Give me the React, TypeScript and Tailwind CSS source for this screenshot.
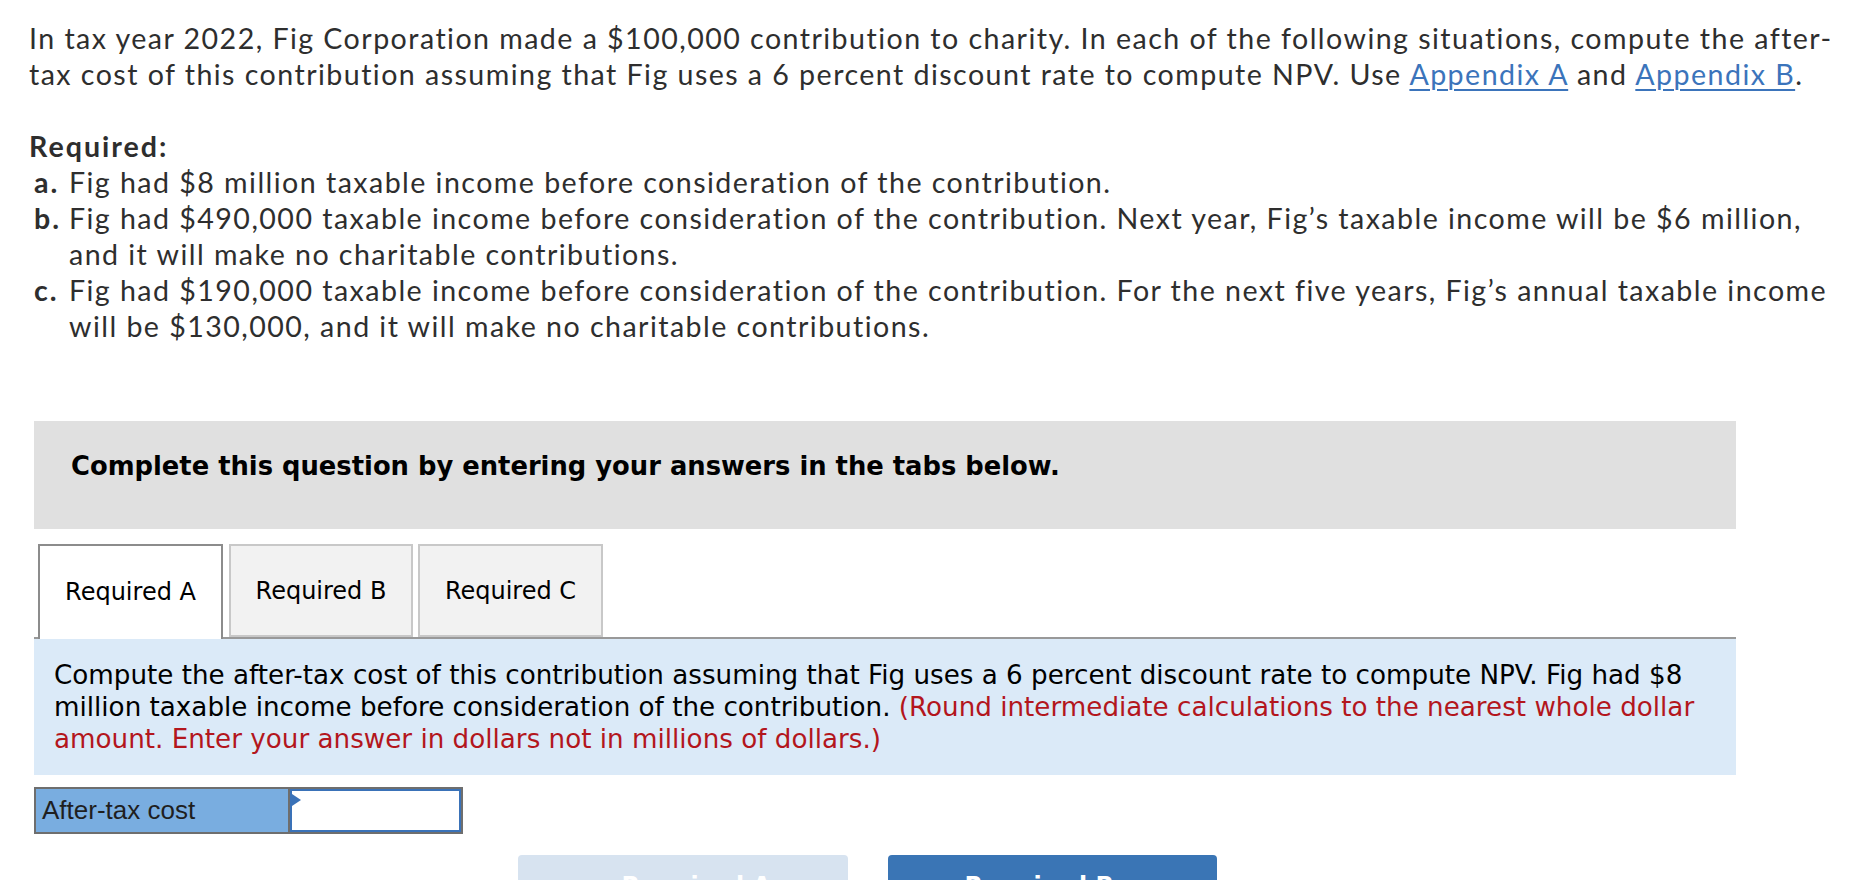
import React from "react";

const link = "text-[#3b74bb] underline underline-offset-[4px] decoration-[2px]";

function Item({ label, children }: { label: string; children: React.ReactNode }) {
  return (
    <div className="flex">
      <span className="w-[40px] shrink-0 pl-[5px] font-bold tracking-[2px]">{label}</span>
      <div>{children}</div>
    </div>
  );
}

function Tab({ label, active, className }: { label: string; active?: boolean; className: string }) {
  return (
    <div
      className={
        active
          ? `h-[95px] -mb-[2px] bg-white border-2 border-b-0 border-[#8c8c8c] flex items-center justify-center pb-[2px] ${className}`
          : `h-[93px] bg-[#f2f2f2] border-2 border-[#c8c8c8] flex items-center justify-center ${className}`
      }
    >
      {label}
    </div>
  );
}

export default function App() {
  return (
    <div className="min-h-screen bg-white">
      {/* question text */}
      <div className="pl-[29px] pt-[20px] text-[28.6px] leading-[36px] tracking-[1.45px] text-[#2e2e2e] font-['Lato',sans-serif] whitespace-nowrap">
        <p>
          In tax year 2022, Fig Corporation made a $100,000 contribution to charity. In each of the following situations, compute the after-
          <br />
          tax cost of this contribution assuming that Fig uses a 6 percent discount rate to compute NPV. Use{" "}
          <a className={link}>Appendix A</a> and <a className={link}>Appendix B</a>.
        </p>
        <p className="mt-[36px] font-bold tracking-[2px]">Required:</p>
        <Item label="a.">Fig had $8 million taxable income before consideration of the contribution.</Item>
        <Item label="b.">
          Fig had $490,000 taxable income before consideration of the contribution. Next year, Fig’s taxable income will be $6 million,
          <br />
          and it will make no charitable contributions.
        </Item>
        <Item label="c.">
          Fig had $190,000 taxable income before consideration of the contribution. For the next five years, Fig’s annual taxable income
          <br />
          will be $130,000, and it will make no charitable contributions.
        </Item>
      </div>

      {/* instructions bar */}
      <div className="ml-[34px] mt-[77px] w-[1702px] h-[108px] bg-[#e0e0e0] pl-[37px] pt-[30px]">
        <p className="font-['DejaVu_Sans',sans-serif] font-bold text-[25.8px] leading-[30px] text-black whitespace-nowrap">
          Complete this question by entering your answers in the tabs below.
        </p>
      </div>

      {/* tabs */}
      <div className="ml-[34px] mt-[15px] w-[1702px] h-[95px] border-b-2 border-[#999] flex items-start font-['DejaVu_Sans',sans-serif] text-[24px] text-black">
        <Tab label="Required A" active className="ml-[4px] w-[185px]" />
        <Tab label="Required B" className="ml-[6px] w-[184px]" />
        <Tab label="Required C" className="ml-[5px] w-[185px]" />
      </div>

      {/* prompt */}
      <div className="ml-[34px] w-[1702px] bg-[#dbeaf8] px-[20px] py-[20px] font-['DejaVu_Sans',sans-serif] text-[26.2px] leading-[32px] text-black whitespace-nowrap">
        Compute the after-tax cost of this contribution assuming that Fig uses a 6 percent discount rate to compute NPV. Fig had $8
        <br />
        million taxable income before consideration of the contribution.{" "}
        <span className="text-[#b3161d]">
          (Round intermediate calculations to the nearest whole dollar
          <br />
          amount. Enter your answer in dollars not in millions of dollars.)
        </span>
      </div>

      {/* answer row */}
      <div className="ml-[34px] mt-[12px] w-[429px] h-[47px] flex border-2 border-[#6e6e6e]">
        <div className="w-[254px] bg-[#79ade0] border-r-2 border-[#6e6e6e] flex items-center pl-[6px] font-['Liberation_Sans',sans-serif] text-[26px] text-[#1f1f1f]">
          After-tax cost
        </div>
        <div className="relative flex-1 bg-white border-2 border-[#3a72b8]">
          <span className="absolute left-0 top-[3px] w-0 h-0 border-y-[6px] border-y-transparent border-l-[9px] border-l-[#3a72b8]" />
        </div>
      </div>

      {/* nav buttons */}
      <div className="mt-[21px] pl-[518px] flex gap-[40px] font-['DejaVu_Sans',sans-serif] font-bold text-[24px] leading-[28px] text-white">
        <div className="w-[330px] h-[52px] rounded-[4px] bg-[#d7e3f0] flex justify-center pt-[17px]">‹&nbsp;&nbsp;Required A</div>
        <div className="w-[329px] h-[52px] rounded-[4px] bg-[#3a75b5] flex justify-center pt-[17px]">Required B&nbsp;&nbsp;›</div>
      </div>
    </div>
  );
}
